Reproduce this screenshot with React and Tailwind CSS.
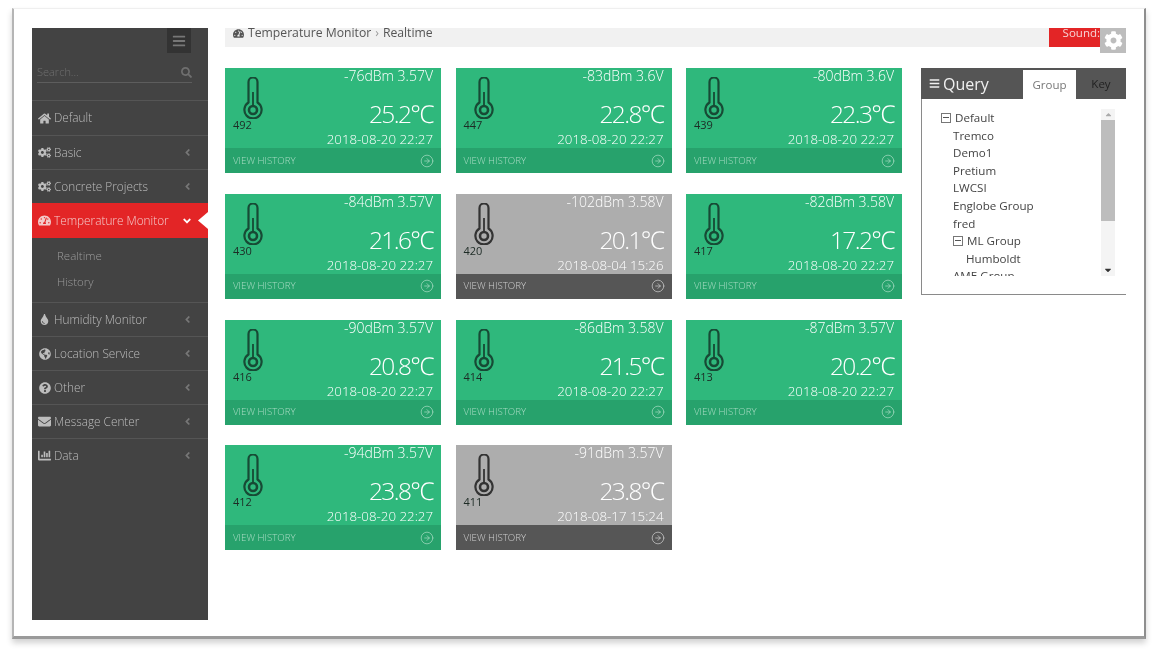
import React from "react";
import { FaHome, FaCogs, FaTachometerAlt, FaTint, FaGlobeAmericas, FaQuestionCircle, FaEnvelope, FaChartBar, FaAngleLeft, FaAngleDown, FaSearch, FaBars, FaCog, FaCaretUp, FaCaretDown } from "react-icons/fa";
import { CircleArrowRight } from "lucide-react";

const font = { fontFamily: '"Open Sans","Noto Sans",sans-serif' };

const cards = [
  ["492", "-76dBm 3.57V", "25.2℃", "2018-08-20 22:27", 1],
  ["447", "-83dBm 3.6V", "22.8℃", "2018-08-20 22:27", 1],
  ["439", "-80dBm 3.6V", "22.3℃", "2018-08-20 22:27", 1],
  ["430", "-84dBm 3.57V", "21.6℃", "2018-08-20 22:27", 1],
  ["420", "-102dBm 3.58V", "20.1℃", "2018-08-04 15:26", 0],
  ["417", "-82dBm 3.58V", "17.2℃", "2018-08-20 22:27", 1],
  ["416", "-90dBm 3.57V", "20.8℃", "2018-08-20 22:27", 1],
  ["414", "-86dBm 3.58V", "21.5℃", "2018-08-20 22:27", 1],
  ["413", "-87dBm 3.57V", "20.2℃", "2018-08-20 22:27", 1],
  ["412", "-94dBm 3.57V", "23.8℃", "2018-08-20 22:27", 1],
  ["411", "-91dBm 3.57V", "23.8℃", "2018-08-17 15:24", 0],
];

function Thermo({ color }) {
  return (
    <svg width="20" height="42" viewBox="0 0 20 42" fill="none" stroke={color} strokeWidth="2.2">
      <path d="M5.5 25.5V5a4.5 4.5 0 0 1 9 0v20.5a8.6 8.6 0 1 1-9 0Z" />
      <circle cx="10" cy="33" r="4" strokeWidth="2.6" />
      <path d="M10 15v14" strokeWidth="1.8" />
    </svg>
  );
}

function Card({ id, sig, temp, date, on }) {
  return (
    <div className={`w-[216px] h-[105px] flex flex-col text-white ${on ? "bg-[#2fb87c]" : "bg-[#adadad]"}`}>
      <div className="relative flex-1 pr-[8px]">
        <div className="absolute left-[18px] top-[9px]"><Thermo color={on ? "#174a35" : "#333333"} /></div>
        <div className="absolute left-[8px] top-[50px] text-[11px] leading-[14px] text-[#1d2b25]">{id}</div>
        <div className="text-right text-[14px] font-light leading-[16px]">{sig}</div>
        <div className="text-right text-[24.5px] font-light leading-[30px] mt-[15px] tracking-[-1.6px]">{temp}</div>
        <div className="text-right text-[13.3px] font-light leading-[16px] mt-[2px]">{date}</div>
      </div>
      <div className={`h-[25px] flex items-center justify-between pl-[8px] pr-[7px] ${on ? "bg-[#27a26c] text-[#a9dcc4]" : "bg-[#565656] text-[#d0d0d0]"}`}>
        <span className="text-[9.7px] font-light">VIEW HISTORY</span>
        <CircleArrowRight size={14} strokeWidth={1.2} />
      </div>
    </div>
  );
}

function MenuItem({ icon: Icon, label, arrow = true, active = false, h = "h-[34px]", size = 13 }) {
  return (
    <div className={`relative ${h} flex items-center pl-[3px] pr-[15px] ${active ? "bg-[#e32526] text-[#f3c9c9]" : "text-[#bdbdbd] border-t border-[#555555]"}`}>
      <span className="w-[19px] flex justify-center"><Icon size={size} /></span>
      <span className="text-[11.8px] font-light flex-1">{label}</span>
      {active ? <FaAngleDown size={12} className="text-white" /> : arrow ? <FaAngleLeft size={11} className="text-[#777777]" /> : null}
      {active && <span className="absolute right-0 top-[9px] w-[10px] h-[17px] bg-white [clip-path:polygon(100%_0,0_50%,100%_100%)]" />}
    </div>
  );
}

function Sidebar() {
  return (
    <aside className="w-[176px] h-[592px] bg-[#434343] shrink-0">
      <div className="flex justify-end pr-[17px]">
        <div className="w-[24px] h-[25px] bg-[#333333] text-[#777777] flex items-center justify-center"><FaBars size={14} /></div>
      </div>
      <div className="mx-[5px] mr-[16px] mt-[9px] h-[21px] flex items-center justify-between border-b border-[#5d5d5d] text-[#6f6f6f]">
        <span className="text-[11px] font-light">Search...</span>
        <FaSearch size={11} />
      </div>
      <div className="mt-[17px]">
        <MenuItem icon={FaHome} label="Default" arrow={false} h="h-[35px]" />
        <MenuItem icon={FaCogs} label="Basic" />
        <MenuItem icon={FaCogs} label="Concrete Projects" />
        <MenuItem icon={FaTachometerAlt} label="Temperature Monitor" active h="h-[35px]" />
        <div className="h-[64px] pl-[25px] pt-[5px] text-[11.5px] font-light text-[#9a9a9a] leading-[26px]">
          <div>Realtime</div>
          <div>History</div>
        </div>
        <MenuItem icon={FaTint} label="Humidity Monitor" size={11} />
        <MenuItem icon={FaGlobeAmericas} label="Location Service" size={12} />
        <MenuItem icon={FaQuestionCircle} label="Other" size={12} />
        <MenuItem icon={FaEnvelope} label="Message Center" />
        <MenuItem icon={FaChartBar} label="Data" />
      </div>
    </aside>
  );
}

function Minus() {
  return <span className="inline-flex w-[10px] h-[10px] border border-[#777777] items-center justify-center mr-[4px]"><span className="w-[6px] h-px bg-[#555555]" /></span>;
}

function Row({ pl, children }) {
  return <div className={`flex items-center h-[17.6px] ${pl}`}>{children}</div>;
}

function Query() {
  return (
    <div className="w-[205px] h-[227px] border-l border-b border-[#8a8a8a] shrink-0">
      <div className="h-[31px] bg-[#555555] flex items-stretch -ml-px">
        <div className="w-[102px] flex items-center gap-[3px] pl-[8px] text-[#f0f0f0] text-[16px]"><FaBars size={11} /><span>Query</span></div>
        <div className="w-[53px] bg-white text-[#777777] text-[11.5px] flex items-center justify-center mt-[2px]">Group</div>
        <div className="flex-1 text-[#222222] text-[11.5px] flex items-center justify-center">Key</div>
      </div>
      <div className="flex justify-between pl-[19px] pr-[11px] pt-[10px]">
        <div className="h-[167px] overflow-hidden text-[11.6px] text-[#444444]">
          <Row pl="pl-0"><Minus />Default</Row>
          <Row pl="pl-[12px]">Tremco</Row>
          <Row pl="pl-[12px]">Demo1</Row>
          <Row pl="pl-[12px]">Pretium</Row>
          <Row pl="pl-[12px]">LWCSI</Row>
          <Row pl="pl-[12px]">Englobe Group</Row>
          <Row pl="pl-[12px]">fred</Row>
          <Row pl="pl-[12px]"><Minus />ML Group</Row>
          <Row pl="pl-[25px]">Humboldt</Row>
          <Row pl="pl-[12px]">AME Group</Row>
        </div>
        <div className="w-[14px] h-[167px] bg-[#f4f4f4] flex flex-col items-center">
          <FaCaretUp size={9} className="text-[#aaaaaa] my-[1px]" />
          <div className="w-full h-[101px] bg-[#bdbdbd]" />
          <div className="flex-1" />
          <FaCaretDown size={10} className="text-[#333333] mb-[1px]" />
        </div>
      </div>
    </div>
  );
}

export default function App() {
  return (
    <div className="w-[1158px] h-[656px] bg-white overflow-hidden pt-[8px] pl-[12px] blur-[0.4px]" style={font}>
      <div className="w-[1134px] h-[631px] bg-white border-l-2 border-r-2 border-b-[3px] border-t border-l-[#b5b5b5] border-r-[#8e8e8e] border-b-[#9a9a9a] border-t-[#efefef] shadow-[0_4px_6px_rgba(0,0,0,0.18)] pl-[18px] pt-[19px] flex">
        <Sidebar />
        <main className="flex-1 pl-[17px] pr-[18px]">
          <div className="relative h-[19px] bg-[#f1f1f1] flex items-start text-[12.2px] text-[#555555]">
            <div className="flex items-center h-[10px] pl-[8px] gap-[4px]">
              <FaTachometerAlt size={11} />
              <span>Temperature Monitor</span>
              <span className="text-[#999999]">›</span>
              <span>Realtime</span>
            </div>
            <div className="absolute right-[26px] top-0 w-[51px] h-[19px] bg-[#e32526] text-[#f6d5d5] text-[11.5px] text-right leading-[10px]">Sound:</div>
            <div className="absolute right-0 top-0 w-[26px] h-[25px] bg-[#bdbdbd] text-white flex items-center justify-center"><FaCog size={19} /></div>
          </div>
          <div className="flex mt-[21px] justify-between">
            <div className="grid grid-cols-[216px_216px_216px] gap-x-[14.5px] gap-y-[20.7px] content-start pt-[0.3px]">
              {cards.map((c) => <Card key={c[0]} id={c[0]} sig={c[1]} temp={c[2]} date={c[3]} on={c[4]} />)}
            </div>
            <Query />
          </div>
        </main>
      </div>
    </div>
  );
}
